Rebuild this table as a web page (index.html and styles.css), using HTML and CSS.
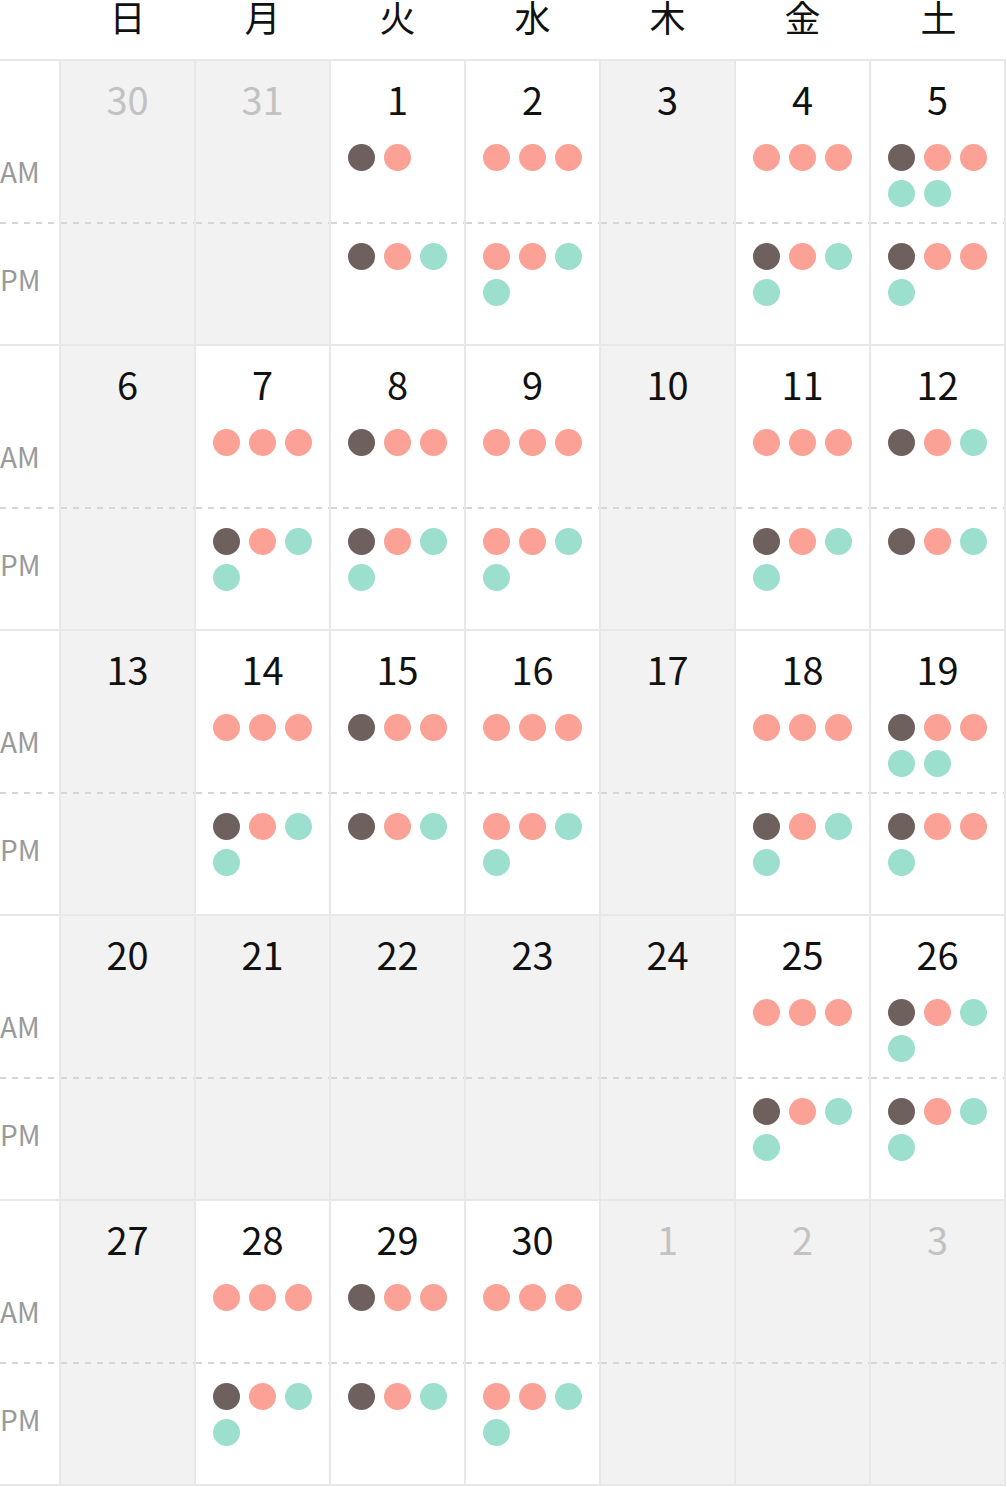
FILE: index.html
```html
<!DOCTYPE html>
<html lang="ja">
<head>
<meta charset="utf-8">
<link rel="stylesheet" href="styles.css">
</head>
<body>
<div class="calendar">
  <div class="head-row">
    <div class="head-blank"></div>
    <div class="wd">日</div><div class="wd">月</div><div class="wd">火</div><div class="wd">水</div><div class="wd">木</div><div class="wd">金</div><div class="wd">土</div>
  </div>

  <!-- week 1 -->
  <div class="week">
    <div class="labels"><div class="lab-am">AM</div><div class="lab-pm">PM</div></div>
    <div class="day off"><div class="am"><div class="num">30</div></div><div class="pm"></div></div>
    <div class="day off"><div class="am"><div class="num">31</div></div><div class="pm"></div></div>
    <div class="day"><div class="am"><div class="num">1</div><div class="dots"><i class="dot d"></i><i class="dot s"></i></div></div><div class="pm"><div class="dots"><i class="dot d"></i><i class="dot s"></i><i class="dot m"></i></div></div></div>
    <div class="day"><div class="am"><div class="num">2</div><div class="dots"><i class="dot s"></i><i class="dot s"></i><i class="dot s"></i></div></div><div class="pm"><div class="dots"><i class="dot s"></i><i class="dot s"></i><i class="dot m"></i><i class="dot m"></i></div></div></div>
    <div class="day closed"><div class="am"><div class="num">3</div></div><div class="pm"></div></div>
    <div class="day"><div class="am"><div class="num">4</div><div class="dots"><i class="dot s"></i><i class="dot s"></i><i class="dot s"></i></div></div><div class="pm"><div class="dots"><i class="dot d"></i><i class="dot s"></i><i class="dot m"></i><i class="dot m"></i></div></div></div>
    <div class="day last"><div class="am"><div class="num">5</div><div class="dots"><i class="dot d"></i><i class="dot s"></i><i class="dot s"></i><i class="dot m"></i><i class="dot m"></i></div></div><div class="pm"><div class="dots"><i class="dot d"></i><i class="dot s"></i><i class="dot s"></i><i class="dot m"></i></div></div></div>
  </div>

  <!-- week 2 -->
  <div class="week">
    <div class="labels"><div class="lab-am">AM</div><div class="lab-pm">PM</div></div>
    <div class="day closed"><div class="am"><div class="num">6</div></div><div class="pm"></div></div>
    <div class="day"><div class="am"><div class="num">7</div><div class="dots"><i class="dot s"></i><i class="dot s"></i><i class="dot s"></i></div></div><div class="pm"><div class="dots"><i class="dot d"></i><i class="dot s"></i><i class="dot m"></i><i class="dot m"></i></div></div></div>
    <div class="day"><div class="am"><div class="num">8</div><div class="dots"><i class="dot d"></i><i class="dot s"></i><i class="dot s"></i></div></div><div class="pm"><div class="dots"><i class="dot d"></i><i class="dot s"></i><i class="dot m"></i><i class="dot m"></i></div></div></div>
    <div class="day"><div class="am"><div class="num">9</div><div class="dots"><i class="dot s"></i><i class="dot s"></i><i class="dot s"></i></div></div><div class="pm"><div class="dots"><i class="dot s"></i><i class="dot s"></i><i class="dot m"></i><i class="dot m"></i></div></div></div>
    <div class="day closed"><div class="am"><div class="num">10</div></div><div class="pm"></div></div>
    <div class="day"><div class="am"><div class="num">11</div><div class="dots"><i class="dot s"></i><i class="dot s"></i><i class="dot s"></i></div></div><div class="pm"><div class="dots"><i class="dot d"></i><i class="dot s"></i><i class="dot m"></i><i class="dot m"></i></div></div></div>
    <div class="day last"><div class="am"><div class="num">12</div><div class="dots"><i class="dot d"></i><i class="dot s"></i><i class="dot m"></i></div></div><div class="pm"><div class="dots"><i class="dot d"></i><i class="dot s"></i><i class="dot m"></i></div></div></div>
  </div>

  <!-- week 3 -->
  <div class="week">
    <div class="labels"><div class="lab-am">AM</div><div class="lab-pm">PM</div></div>
    <div class="day closed"><div class="am"><div class="num">13</div></div><div class="pm"></div></div>
    <div class="day"><div class="am"><div class="num">14</div><div class="dots"><i class="dot s"></i><i class="dot s"></i><i class="dot s"></i></div></div><div class="pm"><div class="dots"><i class="dot d"></i><i class="dot s"></i><i class="dot m"></i><i class="dot m"></i></div></div></div>
    <div class="day"><div class="am"><div class="num">15</div><div class="dots"><i class="dot d"></i><i class="dot s"></i><i class="dot s"></i></div></div><div class="pm"><div class="dots"><i class="dot d"></i><i class="dot s"></i><i class="dot m"></i></div></div></div>
    <div class="day"><div class="am"><div class="num">16</div><div class="dots"><i class="dot s"></i><i class="dot s"></i><i class="dot s"></i></div></div><div class="pm"><div class="dots"><i class="dot s"></i><i class="dot s"></i><i class="dot m"></i><i class="dot m"></i></div></div></div>
    <div class="day closed"><div class="am"><div class="num">17</div></div><div class="pm"></div></div>
    <div class="day"><div class="am"><div class="num">18</div><div class="dots"><i class="dot s"></i><i class="dot s"></i><i class="dot s"></i></div></div><div class="pm"><div class="dots"><i class="dot d"></i><i class="dot s"></i><i class="dot m"></i><i class="dot m"></i></div></div></div>
    <div class="day last"><div class="am"><div class="num">19</div><div class="dots"><i class="dot d"></i><i class="dot s"></i><i class="dot s"></i><i class="dot m"></i><i class="dot m"></i></div></div><div class="pm"><div class="dots"><i class="dot d"></i><i class="dot s"></i><i class="dot s"></i><i class="dot m"></i></div></div></div>
  </div>

  <!-- week 4 -->
  <div class="week">
    <div class="labels"><div class="lab-am">AM</div><div class="lab-pm">PM</div></div>
    <div class="day closed"><div class="am"><div class="num">20</div></div><div class="pm"></div></div>
    <div class="day closed"><div class="am"><div class="num">21</div></div><div class="pm"></div></div>
    <div class="day closed"><div class="am"><div class="num">22</div></div><div class="pm"></div></div>
    <div class="day closed"><div class="am"><div class="num">23</div></div><div class="pm"></div></div>
    <div class="day closed"><div class="am"><div class="num">24</div></div><div class="pm"></div></div>
    <div class="day"><div class="am"><div class="num">25</div><div class="dots"><i class="dot s"></i><i class="dot s"></i><i class="dot s"></i></div></div><div class="pm"><div class="dots"><i class="dot d"></i><i class="dot s"></i><i class="dot m"></i><i class="dot m"></i></div></div></div>
    <div class="day last"><div class="am"><div class="num">26</div><div class="dots"><i class="dot d"></i><i class="dot s"></i><i class="dot m"></i><i class="dot m"></i></div></div><div class="pm"><div class="dots"><i class="dot d"></i><i class="dot s"></i><i class="dot m"></i><i class="dot m"></i></div></div></div>
  </div>

  <!-- week 5 -->
  <div class="week">
    <div class="labels"><div class="lab-am">AM</div><div class="lab-pm">PM</div></div>
    <div class="day closed"><div class="am"><div class="num">27</div></div><div class="pm"></div></div>
    <div class="day"><div class="am"><div class="num">28</div><div class="dots"><i class="dot s"></i><i class="dot s"></i><i class="dot s"></i></div></div><div class="pm"><div class="dots"><i class="dot d"></i><i class="dot s"></i><i class="dot m"></i><i class="dot m"></i></div></div></div>
    <div class="day"><div class="am"><div class="num">29</div><div class="dots"><i class="dot d"></i><i class="dot s"></i><i class="dot s"></i></div></div><div class="pm"><div class="dots"><i class="dot d"></i><i class="dot s"></i><i class="dot m"></i></div></div></div>
    <div class="day"><div class="am"><div class="num">30</div><div class="dots"><i class="dot s"></i><i class="dot s"></i><i class="dot s"></i></div></div><div class="pm"><div class="dots"><i class="dot s"></i><i class="dot s"></i><i class="dot m"></i><i class="dot m"></i></div></div></div>
    <div class="day off"><div class="am"><div class="num">1</div></div><div class="pm"></div></div>
    <div class="day off"><div class="am"><div class="num">2</div></div><div class="pm"></div></div>
    <div class="day off last"><div class="am"><div class="num">3</div></div><div class="pm"></div></div>
  </div>
</div>
</body>
</html>
```

FILE: styles.css
```css
* { box-sizing: border-box; margin: 0; padding: 0; }

html, body {
  background: #ffffff;
}

body {
  font-family: "Noto Sans CJK JP", "Noto Sans", sans-serif;
  color: #111111;
}

.calendar {
  width: 1007px;
}

.head-row,
.week {
  display: grid;
  grid-template-columns: 59px repeat(6, 135px) 137px;
  border-bottom: 2px solid #e8e8e8;
  width: 1006px;
}

.head-row {
  height: 61px;
  align-items: start;
}

.wd {
  font-size: 36px;
  line-height: 36px;
  text-align: center;
  padding-left: 2px;
  margin-top: -2px;
}

.week {
  height: 285px;
}

.labels {
  display: flex;
  flex-direction: column;
  color: #9a9a9a;
  font-size: 28px;
  line-height: 28px;
}

.lab-am {
  height: 161px;
  padding-top: 96px;
}

.lab-pm,
.pm {
  background-image: repeating-linear-gradient(90deg, #d6d6d6 0 6px, transparent 6px 12px);
  background-repeat: no-repeat;
  background-size: 100% 2px;
  background-position: 0 0;
}

.lab-pm {
  height: 122px;
  padding-top: 43px;
}

.day {
  display: flex;
  flex-direction: column;
  border-left: 2px solid #e8e8e8;
  background: #ffffff;
}

.day.last {
  border-right: 2px solid #e8e8e8;
}

.day.closed,
.day.off {
  background-color: #f2f2f2;
}

.am {
  height: 161px;
  padding-top: 18px;
}

.pm {
  height: 122px;
  padding-top: 21px;
}

.num {
  font-size: 38px;
  line-height: 40px;
  height: 40px;
  text-align: center;
}

.day.off .num {
  color: #c2c2c2;
}

.am .dots {
  margin-top: 25px;
}

.dots {
  width: 99px;
  margin: 0 auto;
  display: flex;
  flex-wrap: wrap;
  gap: 9px;
}

.dot {
  display: block;
  width: 27px;
  height: 27px;
  border-radius: 50%;
}

.dot.d { background: #6e605c; }
.dot.s { background: #fba196; }
.dot.m { background: #9ddfcf; }
```
